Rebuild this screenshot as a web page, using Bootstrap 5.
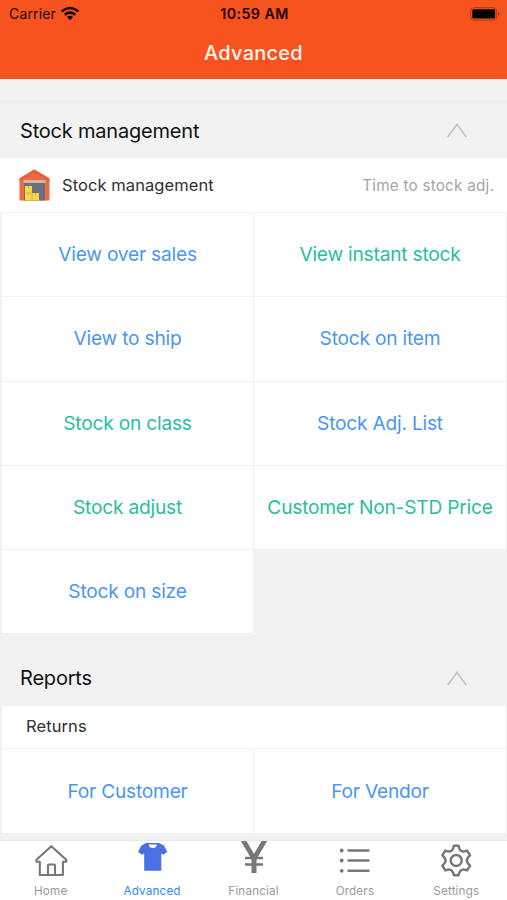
<!DOCTYPE html>
<html lang="en">
<head>
<meta charset="utf-8">
<meta name="viewport" content="width=device-width, initial-scale=1">
<title>Advanced</title>
<link href="https://cdn.jsdelivr.net/npm/bootstrap@5.3.0/dist/css/bootstrap.min.css" rel="stylesheet">
<style>
body{font-family:Inter,"Liberation Sans",sans-serif;background:#f2f2f2;color:#111;line-height:1.2}
.app{height:900px}
.topbar{height:79px;background:#f6531e}
.status{height:28px;font-size:14px;color:#240a02;padding-left:9px;padding-right:7px}
.status>div{flex:1 1 0}
.carrier{letter-spacing:.15px}
.clock{font-weight:600;font-size:14.2px;color:#1c0500;letter-spacing:.45px}
.title{height:49px;font-size:20px;font-weight:500;color:#fff3ee;letter-spacing:.25px}
.spacer-top{height:24px;border-bottom:2px solid #eee}
.sec{height:55px;font-size:20px;padding-left:20px;padding-right:40px;letter-spacing:-.2px}
.sec.second{height:72px;padding-top:18px}
.info{height:54px;padding-left:19px;padding-right:13px;font-size:16.5px;color:#303030;letter-spacing:.08px}
.info span{padding-top:1px}
.info .note{font-size:15.3px;color:#a5a5a5;letter-spacing:.2px;padding-top:2px}
.tiles{display:grid;grid-template-columns:251px 252px;grid-auto-rows:83.3px;gap:1px;padding:1px 1px 0 2px}
.tiles a{background:#fff;color:#4a97ee;font-size:19.2px;text-decoration:none;letter-spacing:-.23px;white-space:nowrap}
.tiles a.g{color:#2bbd9f}
.sub{height:42px;margin:1px 1px 0 2px;padding-left:24px;padding-bottom:1px;font-size:16.5px;color:#303030;letter-spacing:.1px}
.tabs{height:60px;border-top:1px solid #e9e9e9}
.tabs a{flex:1 1 0;color:#9a9a9a;font-size:11.7px;text-decoration:none;letter-spacing:.15px}
.tabs svg{height:40px;width:40px;display:block;margin-bottom:3px}
.tabs a.active{color:#3089f5}
</style>
<script src="https://cdn.jsdelivr.net/npm/bootstrap@5.3.0/dist/js/bootstrap.bundle.min.js"></script>
</head>
<body>
<div class="app d-flex flex-column overflow-hidden">
<header class="topbar flex-shrink-0">
 <div class="status d-flex align-items-center">
  <div class="d-flex align-items-center"><span class="carrier">Carrier</span>
   <svg class="ms-1" width="20" height="16" viewBox="-1 -1 20 16" fill="none" stroke="#1c0500" stroke-width="2.6"><path d="M.6 4.400Q9-2.400 17.400 4.400"/><path d="M3.700 7.700Q9 3.400 14.300 7.700"/><path d="M5.900 10Q9 7.600 12.100 10L9 13.200z" fill="#1c0500" stroke="none"/></svg></div>
  <div class="clock text-center">10:59 AM</div>
  <div class="d-flex justify-content-end"><svg width="30" height="14" viewBox="0 0 30 14"><rect x=".7" y=".7" width="26" height="12.400" rx="3.500" fill="none" stroke="#a83b18"/><rect x="2.300" y="2.300" width="22.800" height="9.200" rx="1.500" fill="#000"/><path d="M28 4.800q3 2.100 0 4.200z" fill="#a83b18"/></svg></div>
 </div>
 <h1 class="title d-flex align-items-center justify-content-center m-0">Advanced</h1>
</header>
<main class="flex-grow-1 overflow-hidden">
 <div class="spacer-top"></div>
 <div class="sec d-flex align-items-center justify-content-between"><span>Stock management</span><svg width="20" height="15" viewBox="0 0 20 15" fill="none" stroke="#c2c2c2" stroke-width="1.600"><path d="M.8 14 10 1.400 19.200 14"/></svg></div>
 <div class="info bg-white d-flex align-items-center">
  <svg width="31" height="32" viewBox="0 0 31 32"><path d="M.5 9.500 15.300.5 30.500 9.500V31.500H.5z" fill="#ed6b43"/><path d="M.5 9.500 15.300.5 30.500 9.500v3L15.300 3.800.5 12.500z" fill="#e65f3c"/><path d="M5 11h21v20.500H5z" fill="#69707d"/><path d="M4.500 11h22v3h-22z" fill="#d3b5ad"/><path d="M6 17h7v7h7v7.500H6z" fill="#f8d84a"/><path d="M9.500 17v2.500M9.500 24v2.500M16.500 24v2.500M6 24h7v7.500" stroke="#d3aa35" stroke-width=".8" fill="none"/></svg>
  <span class="ms-2 ps-1">Stock management</span><span class="note ms-auto">Time to stock adj.</span></div>
 <div class="tiles">
  <a href="#" class="d-flex align-items-center justify-content-center">View over sales</a>
  <a href="#" class="g d-flex align-items-center justify-content-center">View instant stock</a>
  <a href="#" class="d-flex align-items-center justify-content-center">View to ship</a>
  <a href="#" class="d-flex align-items-center justify-content-center">Stock on item</a>
  <a href="#" class="g d-flex align-items-center justify-content-center">Stock on class</a>
  <a href="#" class="d-flex align-items-center justify-content-center">Stock Adj. List</a>
  <a href="#" class="g d-flex align-items-center justify-content-center">Stock adjust</a>
  <a href="#" class="g d-flex align-items-center justify-content-center">Customer Non-STD Price</a>
  <a href="#" class="d-flex align-items-center justify-content-center">Stock on size</a>
 </div>
 <div class="sec second d-flex align-items-center justify-content-between"><span>Reports</span><svg width="20" height="15" viewBox="0 0 20 15" fill="none" stroke="#c2c2c2" stroke-width="1.600"><path d="M.8 14 10 1.400 19.200 14"/></svg></div>
 <div class="sub bg-white d-flex align-items-center">Returns</div>
 <div class="tiles">
  <a href="#" class="d-flex align-items-center justify-content-center">For Customer</a>
  <a href="#" class="d-flex align-items-center justify-content-center">For Vendor</a>
 </div>
</main>
<nav class="tabs bg-white d-flex flex-shrink-0">
 <a href="#" class="d-flex flex-column align-items-center"><svg viewBox="0 0 40 40" fill="none" stroke="#777" stroke-width="2.100" stroke-linejoin="round"><path d="M8.800 20.800H5.400v-2L20.300 5.200l15 13.600v2h-3.400V34H8.800z"/><path d="M17 34v-9.500q0-1 1-1h5q1 0 1 1V34"/></svg><span>Home</span></a>
 <a href="#" class="active d-flex flex-column align-items-center"><svg viewBox="0 0 40 40"><path d="M14 2h13L32 4.500 35.300 11l-4 2.800-2-1.200V29.800H12.200V12.600l-2 1.200L6 11 9.300 4.500z" fill="#4a70e3"/><path d="M16.800 3.500h8q-.2 3.600-4 3.600t-4-3.600z" fill="#fff"/></svg><span>Advanced</span></a>
 <a href="#" class="d-flex flex-column align-items-center"><svg viewBox="0 0 40 40" fill="none" stroke="#777"><path d="M9 -1 20 17.500 31 -1" stroke-width="4.800"/><path d="M20 16v16" stroke-width="5"/><path d="M11 17h18M11 23.500h18" stroke-width="2.600"/></svg><span>Financial</span></a>
 <a href="#" class="d-flex flex-column align-items-center"><svg viewBox="0 0 40 40" fill="#777"><circle cx="6.700" cy="9.500" r="1.900"/><circle cx="6.700" cy="19.500" r="1.900"/><circle cx="6.700" cy="29.800" r="1.900"/><path d="M13.500 9.500h20M13.500 19.500h20M13.500 29.800h20" stroke="#777" stroke-width="2.400" stroke-linecap="round"/></svg><span>Orders</span></a>
 <a href="#" class="d-flex flex-column align-items-center"><svg viewBox="0 0 40 40" fill="none" stroke="#777" stroke-width="2.400" stroke-linejoin="round"><path d="M17.800 4.800h4.800q.6 4.300 3.200 5.400 1.500.9 5.300-.6l3 4.800q-3.300 2.700-3.300 5.100t3.300 5.100l-3 4.800q-3.800-1.500-5.300-.6-2.600 1.100-3.200 5.400h-4.800q-.6-4.300-3.200-5.400-1.500-.9-5.300.6l-3-4.800q3.300-2.700 3.300-5.100t-3.300-5.100l3-4.800q3.800 1.500 5.300.6 2.600-1.100 3.200-5.400z"/><circle cx="20.200" cy="19.500" r="5.500"/></svg><span>Settings</span></a>
</nav>
</div>
</body>
</html>
